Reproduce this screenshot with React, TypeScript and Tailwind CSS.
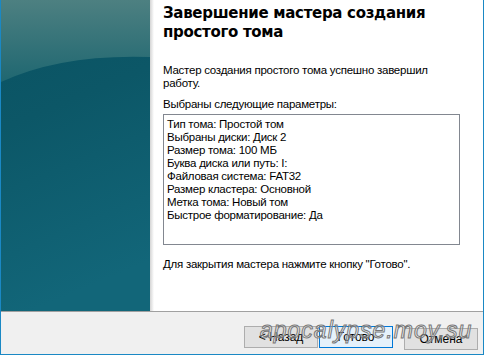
import React from "react"

const params = [
  "Тип тома: Простой том",
  "Выбраны диски: Диск 2",
  "Размер тома: 100 МБ",
  "Буква диска или путь: I:",
  "Файловая система: FAT32",
  "Размер кластера: Основной",
  "Метка тома: Новый том",
  "Быстрое форматирование: Да",
]

function SidePanelArt() {
  return (
    <svg width="149" height="311" viewBox="0 0 149 311" className="block">
      <defs>
        <linearGradient id="base" x1="0" y1="0" x2="0.2" y2="1">
          <stop offset="0" stopColor="#0a5262" />
          <stop offset="0.4" stopColor="#0c5767" />
          <stop offset="1" stopColor="#126679" />
        </linearGradient>
        <linearGradient id="hi" x1="0" y1="0" x2="0" y2="1">
          <stop offset="0" stopColor="#4d8081" />
          <stop offset="1" stopColor="#1f6771" />
        </linearGradient>
      </defs>
      <rect width="149" height="311" fill="url(#base)" />
      <path d="M0 0 H149 V57 Q60 54 0 82 Z" fill="url(#hi)" />
    </svg>
  )
}

function WizardButton({ label, focused }: { label: string; focused?: boolean }) {
  return (
    <button
      className={
        focused
          ? "w-[74px] h-[22px] border border-[#0078d7] bg-[#e5f1fb] text-[12px] text-black"
          : "w-[74px] h-[22px] border border-[#adadad] bg-[#e1e1e1] text-[12px] text-black"
      }
    >
      {label}
    </button>
  )
}

export default function App() {
  return (
    <div
      className="relative w-[484px] h-[355px] overflow-hidden border-x border-b border-[#1a88c4] bg-white flex flex-col"
      style={{ fontFamily: '"Liberation Sans", Arial, sans-serif' }}
    >
      <div className="flex h-[311px]">
        <div className="w-[149px] shrink-0">
          <SidePanelArt />
        </div>
        <div className="w-[4px] shrink-0 bg-gradient-to-r from-[#d4d4d4] to-white" />
        <div className="flex-1 pl-[9px] pr-[23px] text-[11.5px] tracking-[-0.25px] text-black">
          <h1
            className="mt-[4px] text-[15px] font-bold leading-[19px] tracking-[-0.3px] text-black"
            style={{ fontFamily: '"DejaVu Sans", Verdana, sans-serif' }}
          >
            Завершение мастера создания простого тома
          </h1>
          <p className="mt-[22px] leading-[13px]">
            Мастер создания простого тома успешно завершил работу.
          </p>
          <p className="mt-[8px] leading-[13px]">Выбраны следующие параметры:</p>
          <div className="mt-[3px] h-[131px] border border-[#828790] px-[3px] pt-[3px]">
            {params.map((p) => (
              <div key={p} className="leading-[13px]">
                {p}
              </div>
            ))}
          </div>
          <p className="mt-[13px] leading-[13px]">
            Для закрытия мастера нажмите кнопку "Готово".
          </p>
        </div>
      </div>
      <div className="h-px bg-[#a0a0a0]" />
      <div className="flex-1 bg-[#f0f0f0] flex items-start justify-end pt-[14px] pr-[5px]">
        <div className="flex gap-[1px]">
          <WizardButton label="< Назад" />
          <WizardButton label="Готово" focused />
        </div>
        <div className="ml-[11px]">
          <WizardButton label="Отмена" />
        </div>
      </div>
      <div
        className="absolute left-[259px] top-[316px] text-[23px] italic leading-[28px] tracking-[1px] text-white/40 [-webkit-text-stroke:1px_#777777] pointer-events-none"
        style={{ fontFamily: '"Liberation Sans", Arial, sans-serif' }}
      >
        apocalypse.moy.su
      </div>
    </div>
  )
}
